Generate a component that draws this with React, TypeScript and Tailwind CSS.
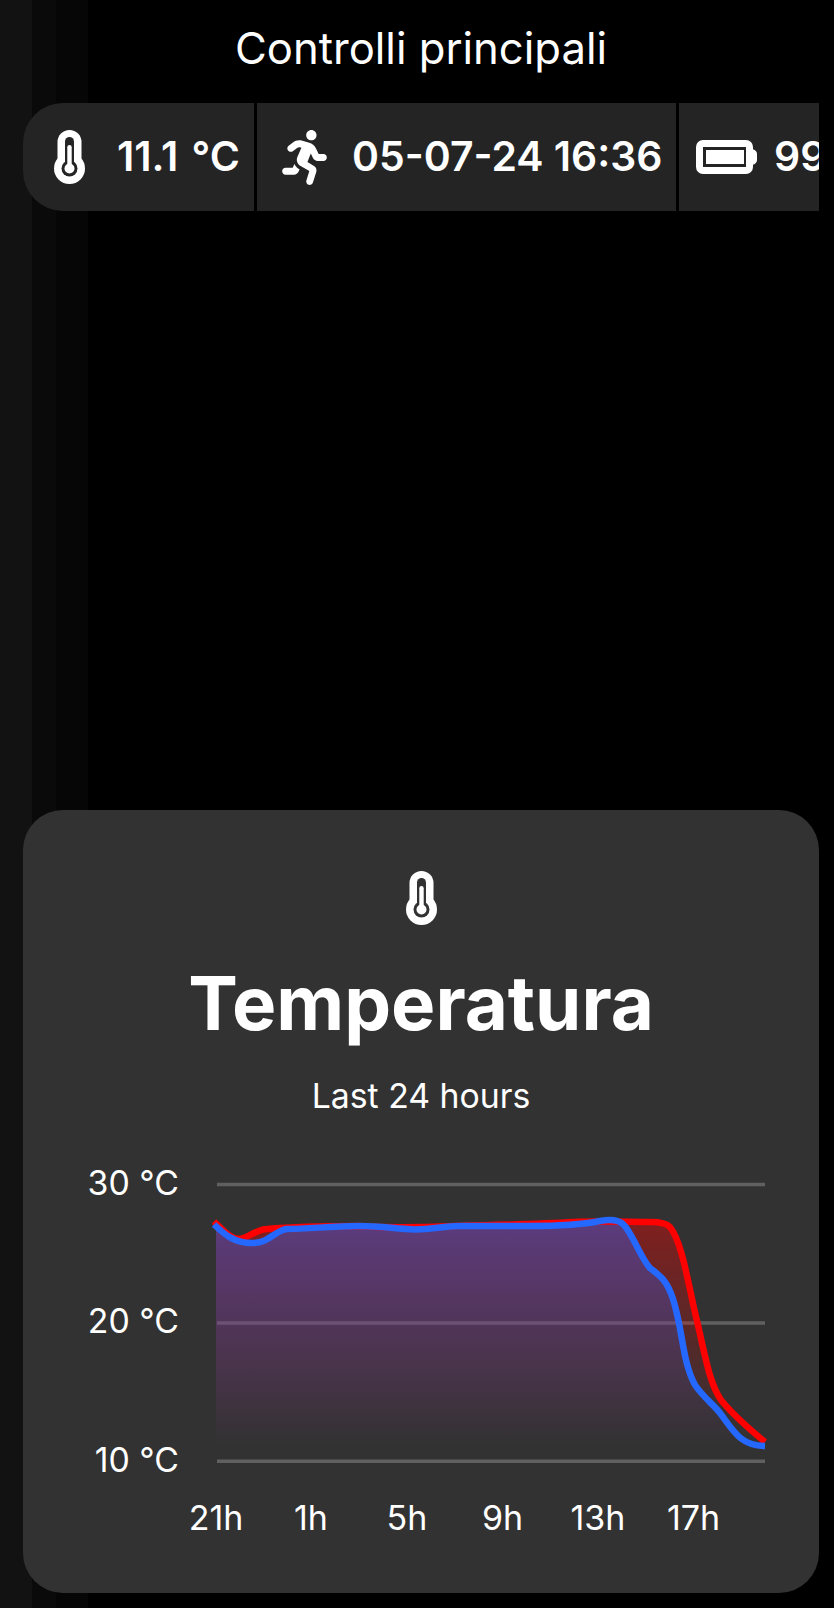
import { FaRunning } from "react-icons/fa"

const RED =
  "M214 1221.5 C224 1231 232 1240 240 1239 C250 1237 256 1229.5 267 1229 C290 1227 330 1226 359 1226 C390 1228 430 1227 455 1226 C500 1225 540 1224 575 1222 C600 1221 630 1222 651 1222 Q665 1222 670 1227 C683 1243 689 1290 697.5 1323 C706 1360 710 1384 721 1400 C733 1415 748 1428 765 1442"
const BLUE =
  "M214 1224.5 C224 1234 234 1243 252 1243 C270 1243 275 1230 287 1229 C310 1229 330 1226 359 1226 C383 1226 395 1229 415 1229.5 C435 1229.5 440 1226 460 1226 L530 1226 C560 1226 580 1225 600 1221 Q616 1218 623 1224 C632 1232 640 1257 650 1268 C660 1276 667 1280 673 1299 C683 1330 682 1361 695 1385 C704 1398 713 1404 720 1413 C733 1430 740 1446 765 1446"

function ThermometerIcon({ hole }: { hole: string }) {
  return (
    <svg viewBox="0 0 31 54" className="h-[54px] w-[31px]" fill="white">
      <rect x="3.5" width="24" height="40" rx="12" />
      <circle cx="15.5" cy="38.5" r="15.5" />
      <g fill={hole}>
        <rect x="11" y="7" width="9" height="30" rx="4.5" />
        <circle cx="15.5" cy="38.5" r="8" />
      </g>
      <rect x="13.3" y="15" width="4.4" height="24" rx="2.2" />
      <circle cx="15.5" cy="38.5" r="5" />
    </svg>
  )
}

function BatteryIcon() {
  return (
    <svg viewBox="0 0 62 34" className="h-[34px] w-[62px]" fill="none">
      <rect x="3.5" y="3.5" width="50" height="27" rx="3.5" stroke="white" strokeWidth="7" />
      <rect x="10" y="10" width="38" height="14" fill="white" />
      <path d="M56 9C59.5 10 61 11.5 61 14V20C61 22.5 59.5 24 56 25Z" fill="white" />
    </svg>
  )
}

function Chart() {
  return (
    <svg viewBox="50 1160 740 400" className="h-[400px] w-[740px]" fill="none">
      <defs>
        <linearGradient id="red" x1="0" x2="0" y1="1222" y2="1446" gradientUnits="userSpaceOnUse">
          <stop stopColor="#ff0000" stopOpacity=".38" />
          <stop offset="1" stopColor="#ff0000" stopOpacity="0" />
        </linearGradient>
        <linearGradient id="blue" x1="0" x2="0" y1="1222" y2="1446" gradientUnits="userSpaceOnUse">
          <stop stopColor="#2962ff" stopOpacity=".42" />
          <stop offset="1" stopColor="#2962ff" stopOpacity="0" />
        </linearGradient>
        <clipPath id="plot">
          <rect x="216" y="1160" width="550" height="302" />
        </clipPath>
      </defs>
      <path d="M217 1184.5H765M217 1323H765M217 1461.2H765" stroke="#606060" strokeWidth="3.5" />
      <g clipPath="url(#plot)">
        <path d={RED + "V1461H214Z"} fill="url(#red)" />
        <path d={BLUE + "V1461H214Z"} fill="url(#blue)" />
      </g>
      <path d={RED} stroke="#ff0000" strokeWidth="6.5" />
      <path d={BLUE} stroke="#2468ff" strokeWidth="6.5" />
      <g fill="#fff" fontSize="33.8" textAnchor="end">
        <text x="179" y="1195">30 °C</text>
        <text x="179" y="1333">20 °C</text>
        <text x="179" y="1471.5">10 °C</text>
      </g>
      <g fill="#fff" fontSize="34" textAnchor="middle">
        <text x="216" y="1530">21h</text>
        <text x="311" y="1530">1h</text>
        <text x="407" y="1530">5h</text>
        <text x="502.5" y="1530">9h</text>
        <text x="598" y="1530">13h</text>
        <text x="693.5" y="1530">17h</text>
      </g>
    </svg>
  )
}

export default function App() {
  return (
    <div className="flex h-[1608px] w-[834px] flex-col bg-[linear-gradient(to_right,#121212_32px,#0a0a0a_32px_56px,#060606_56px_88px,#000_88px)] pr-[15px] pl-[23px] font-['Inter',sans-serif] text-white [font-optical-sizing:none]">
      <h1 className="h-[103px] pt-[17px] text-center text-[43.6px] leading-[64px] font-normal">
        Controlli principali
      </h1>

      <div className="flex h-[108px] gap-x-[3px] overflow-hidden rounded-l-[40px] text-[40.9px] font-semibold whitespace-nowrap">
        <div className="flex w-[231px] shrink-0 items-center bg-[#242424] pl-[31px]">
          <ThermometerIcon hole="#242424" />
          <span className="ml-[32px] [word-spacing:3px]">11.1 °C</span>
        </div>
        <div className="flex w-[419px] shrink-0 items-center bg-[#242424] pl-[25px]">
          <FaRunning className="h-[55px] w-[45px]" />
          <span className="ml-[25px]">05-07-24 16:36</span>
        </div>
        <div className="flex w-[240px] shrink-0 items-center bg-[#242424] pl-[17px]">
          <BatteryIcon />
          <span className="ml-[16px]">99 %</span>
        </div>
      </div>

      <div className="mt-[599px] flex h-[783px] flex-col items-center rounded-[40px] bg-[#323232] pt-[61px]">
        <ThermometerIcon hole="#323232" />
        <h2 className="mt-[33px] text-[74.4px] leading-[90px] font-bold">Temperatura</h2>
        <p className="mt-[26px] text-[33.8px] leading-[44px]">Last 24 hours</p>
        <div className="mt-[42px] -ml-[2px]">
          <Chart />
        </div>
      </div>
    </div>
  )
}
